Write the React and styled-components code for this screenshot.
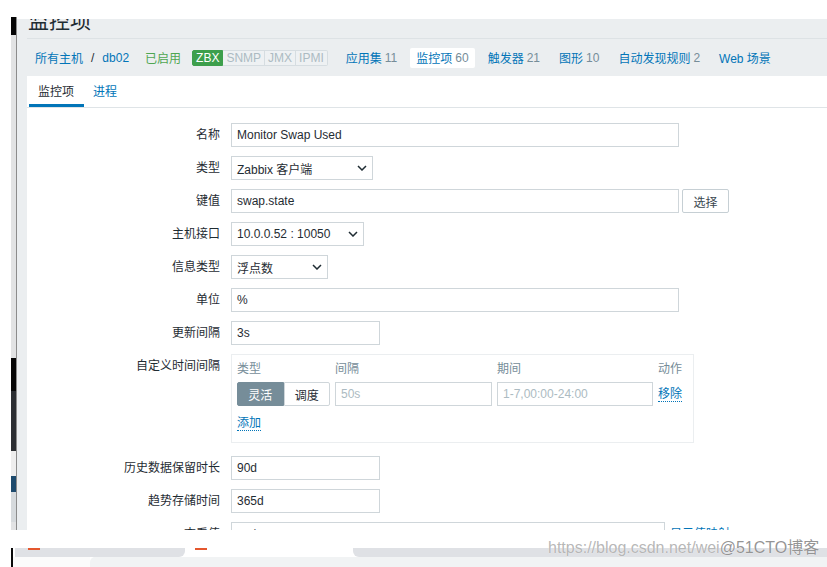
import React from 'react';
import styled, { createGlobalStyle } from 'styled-components';

const GlobalStyle = createGlobalStyle`
  html, body { margin: 0; padding: 0; background: #fff; }
  body {
    font-family: "Liberation Sans", "Noto Sans CJK SC", sans-serif;
    font-size: 12px;
    color: #1f2c33;
  }
`;

const Page = styled.div`
  position: relative;
  width: 827px;
  height: 567px;
  overflow: hidden;
  background: #fff;
`;

const Shot = styled.div`
  display: flex;
  height: 513px;
  margin: 17px 0 0 11px;
`;

const Strip = styled.div`
  display: flex;
  flex-direction: column;
  width: 5px;
  border-right: 1px solid #8c8c8c;
  background: #e2e3e4;
`;

const Seg = styled.div`
  height: ${p => p.$h}px;
  background: ${p => p.$c};
`;

const Main = styled.div`
  flex: 1;
  display: flex;
  flex-direction: column;
  min-width: 0;
  background: #ebeef0;
  border-top: 2px solid #fff;
  padding-left: 10px;
`;

const TitleBar = styled.div`
  height: 19px;
  overflow: hidden;
  border-bottom: 1px solid #dde2e5;
`;

const Title = styled.h1`
  margin: -9px 0 0 1px;
  font-size: 21px;
  line-height: 21px;
  font-weight: normal;
  color: #1f2c33;
`;

const Nav = styled.div`
  height: 37px;
  display: flex;
  align-items: center;
  padding-left: 8px;
  white-space: nowrap;
`;

const Crumb = styled.span`
  color: #0275b8;
`;

const Slash = styled.span`
  margin: 0 8px;
  color: #1f2c33;
`;

const Status = styled.span`
  margin: 0 11px 0 16px;
  color: #4fa652;
`;

const Badges = styled.div`
  display: flex;
  height: 16px;
  margin-right: 12px;
`;

const Badge = styled.span`
  display: flex;
  align-items: center;
  padding: 0 3px;
  height: 16px;
  box-sizing: border-box;
  font-size: 12px;
  color: ${p => (p.$on ? '#fff' : '#acbbc2')};
  background: ${p => (p.$on ? '#3d9f4c' : '#eef1f3')};
  border: 1px solid ${p => (p.$on ? '#3d9f4c' : '#d6dde1')};
  border-left-width: ${p => (p.$first ? 1 : 0)}px;
  border-radius: ${p => (p.$first ? '2px 0 0 2px' : p.$last ? '0 2px 2px 0' : '0')};
`;

const NavItem = styled.span`
  display: flex;
  align-items: center;
  height: 20px;
  padding: 0 6px;
  margin-right: 7px;
  border-radius: 2px;
  color: #0275b8;
  background: ${p => (p.$active ? '#fff' : 'transparent')};
`;

const Count = styled.span`
  margin-left: 3px;
  color: #768d99;
`;

const Panel = styled.div`
  flex: 1;
  background: #fff;
  overflow: hidden;
`;

const Tabs = styled.div`
  display: flex;
  height: 31px;
  padding-left: 2px;
  border-bottom: 1px solid #dfe4e7;
`;

const Tab = styled.div`
  display: flex;
  align-items: center;
  box-sizing: border-box;
  height: 31px;
  padding: 0 10px 0 9px;
  color: ${p => (p.$active ? '#1f2c33' : '#0275b8')};
  border-bottom: 3px solid ${p => (p.$active ? '#0275b8' : 'transparent')};
`;

const Form = styled.div`
  display: grid;
  grid-template-columns: 193px 1fr;
  column-gap: 11px;
  row-gap: 9px;
  padding-top: 15px;
`;

const Label = styled.div`
  text-align: right;
  line-height: 24px;
  white-space: nowrap;
`;

const Field = styled.div`
  display: flex;
  align-items: center;
  gap: ${p => p.$gap || 0}px;
  margin-bottom: ${p => p.$mb || 0}px;
`;

const Input = styled.div`
  display: flex;
  align-items: center;
  box-sizing: border-box;
  width: ${p => p.$w}px;
  height: 24px;
  padding: 0 5px;
  border: 1px solid #cfd6da;
  background: #fff;
  color: ${p => (p.$ph ? '#acbbc2' : '#1f2c33')};
  white-space: nowrap;
`;

const Select = styled(Input)`
  justify-content: space-between;
  padding-right: 5px;
`;

const Button = styled.div`
  display: flex;
  align-items: center;
  justify-content: center;
  box-sizing: border-box;
  width: 47px;
  height: 24px;
  border: 1px solid #c6cfd4;
  border-radius: 2px;
  background: #fff;
  color: #3a4750;
`;

const Link = styled.span`
  color: #0275b8;
  border-bottom: 1px dotted #0275b8;
  line-height: 14px;
  white-space: nowrap;
`;

const IntervalBox = styled.div`
  box-sizing: border-box;
  width: 463px;
  padding: 5px 0 10px 5px;
  border: 1px solid #ebeef0;
`;

const IntervalGrid = styled.div`
  display: grid;
  grid-template-columns: 93px 157px 156px auto;
  column-gap: 5px;
  row-gap: 4px;
  align-items: center;
`;

const Head = styled.div`
  line-height: 18px;
  color: #768d99;
`;

const Toggle = styled.div`
  display: flex;
  height: 24px;
`;

const ToggleOpt = styled.div`
  flex: 1;
  display: flex;
  align-items: center;
  justify-content: center;
  box-sizing: border-box;
  border: 1px solid ${p => (p.$on ? '#768d99' : '#cfd6da')};
  background: ${p => (p.$on ? '#768d99' : '#fff')};
  color: ${p => (p.$on ? '#fff' : '#1f2c33')};
  border-radius: ${p => (p.$on ? '2px 0 0 2px' : '0 2px 2px 0')};
`;

const AddRow = styled.div`
  margin-top: 8px;
  line-height: 18px;
`;

const Lower = styled.div`
  margin: 18px 0 0 11px;
  display: flex;
  height: 9px;
`;

const Piece = styled.div`
  position: relative;
  width: ${p => p.$w}px;
  flex: ${p => (p.$grow ? 1 : 'none')};
  background: ${p => p.$c};
  border-radius: ${p => p.$r || '0'};
`;

const Mark = styled.span`
  display: block;
  width: 12px;
  height: 2px;
  margin-left: ${p => p.$x}px;
  background: #e4572e;
`;

const Bar = styled.div`
  display: flex;
  height: 10px;
  margin-left: 11px;
`;

const Watermark = styled.div`
  position: absolute;
  left: 548px;
  top: 538px;
  display: flex;
  font-size: 16px;
  line-height: 20px;
  white-space: nowrap;
  color: rgba(170, 170, 170, 0.85);
  text-shadow: 0 0 1px #fff;
`;

const WmBrand = styled.span`
  margin-left: 0;
  color: rgba(130, 130, 130, 0.85);
`;

const Chevron = () => (
  <svg width="10" height="6" viewBox="0 0 10 6">
    <polyline points="1,1 5,5 9,1" fill="none" stroke="#1f2c33" strokeWidth="1.5" />
  </svg>
);

const navItems = [
  ['应用集', 11],
  ['监控项', 60, true],
  ['触发器', 21],
  ['图形', 10],
  ['自动发现规则', 2],
  ['Web 场景'],
];

export default function App() {
  return (
    <Page>
      <GlobalStyle />
      <Shot>
        <Strip>
          <Seg $h={18} $c="#050505" />
          <Seg $h={323} $c="#e2e3e4" />
          <Seg $h={33} $c="#060606" />
          <Seg $h={60} $c="#2b2e32" />
          <Seg $h={25} $c="#eeeeee" />
          <Seg $h={16} $c="#1d4a6d" />
          <Seg $h={30} $c="#d6dadd" />
        </Strip>
        <Main>
          <TitleBar>
            <Title>监控项</Title>
          </TitleBar>
          <Nav>
            <Crumb>所有主机</Crumb>
            <Slash>/</Slash>
            <Crumb>db02</Crumb>
            <Status>已启用</Status>
            <Badges>
              <Badge $on $first>ZBX</Badge>
              <Badge>SNMP</Badge>
              <Badge>JMX</Badge>
              <Badge $last>IPMI</Badge>
            </Badges>
            {navItems.map(([name, n, active]) => (
              <NavItem key={name} $active={active}>
                {name}
                {n !== undefined && <Count>{n}</Count>}
              </NavItem>
            ))}
          </Nav>
          <Panel>
            <Tabs>
              <Tab $active>监控项</Tab>
              <Tab>进程</Tab>
            </Tabs>
            <Form>
              <Label>名称</Label>
              <Field><Input $w={448}>Monitor Swap Used</Input></Field>

              <Label>类型</Label>
              <Field><Select $w={142}>Zabbix 客户端<Chevron /></Select></Field>

              <Label>键值</Label>
              <Field $gap={3}>
                <Input $w={448}>swap.state</Input>
                <Button>选择</Button>
              </Field>

              <Label>主机接口</Label>
              <Field><Select $w={133}>10.0.0.52 : 10050<Chevron /></Select></Field>

              <Label>信息类型</Label>
              <Field><Select $w={97}>浮点数<Chevron /></Select></Field>

              <Label>单位</Label>
              <Field><Input $w={448}>%</Input></Field>

              <Label>更新间隔</Label>
              <Field><Input $w={149}>3s</Input></Field>

              <Label>自定义时间间隔</Label>
              <Field $mb={4}>
                <IntervalBox>
                  <IntervalGrid>
                    <Head>类型</Head>
                    <Head>间隔</Head>
                    <Head>期间</Head>
                    <Head>动作</Head>
                    <Toggle>
                      <ToggleOpt $on>灵活</ToggleOpt>
                      <ToggleOpt>调度</ToggleOpt>
                    </Toggle>
                    <Input $w={157} $ph>50s</Input>
                    <Input $w={156} $ph>1-7,00:00-24:00</Input>
                    <div><Link>移除</Link></div>
                  </IntervalGrid>
                  <AddRow><Link>添加</Link></AddRow>
                </IntervalBox>
              </Field>

              <Label>历史数据保留时长</Label>
              <Field><Input $w={149}>90d</Input></Field>

              <Label>趋势存储时间</Label>
              <Field><Input $w={149}>365d</Input></Field>

              <Label>查看值</Label>
              <Field $gap={5}>
                <Input $w={434}>不变</Input>
                <Link>显示值映射</Link>
              </Field>
            </Form>
          </Panel>
        </Main>
      </Shot>
      <Lower>
        <Piece $w={2} $c="#0a0a0a" />
        <Piece $w={2} $c="#fff" />
        <Piece $w={170} $c="#dfe1e5" $r="0 0 6px 0"><Mark $x={13} /></Piece>
        <Piece $w={168} $c="#fff"><Mark $x={10} /></Piece>
        <Piece $grow $c="#dfe1e5" $r="0 0 0 6px" />
      </Lower>
      <Bar>
        <Piece $w={2} $c="#0a0a0a" />
        <Piece $w={77} $c="#fbfbfb" />
        <Piece $grow $c="#f1f3f4" $r="5px 0 0 0" />
      </Bar>
      <Watermark>
        https://blog.csdn.net/wei
        <WmBrand>@51CTO博客</WmBrand>
      </Watermark>
    </Page>
  );
}
